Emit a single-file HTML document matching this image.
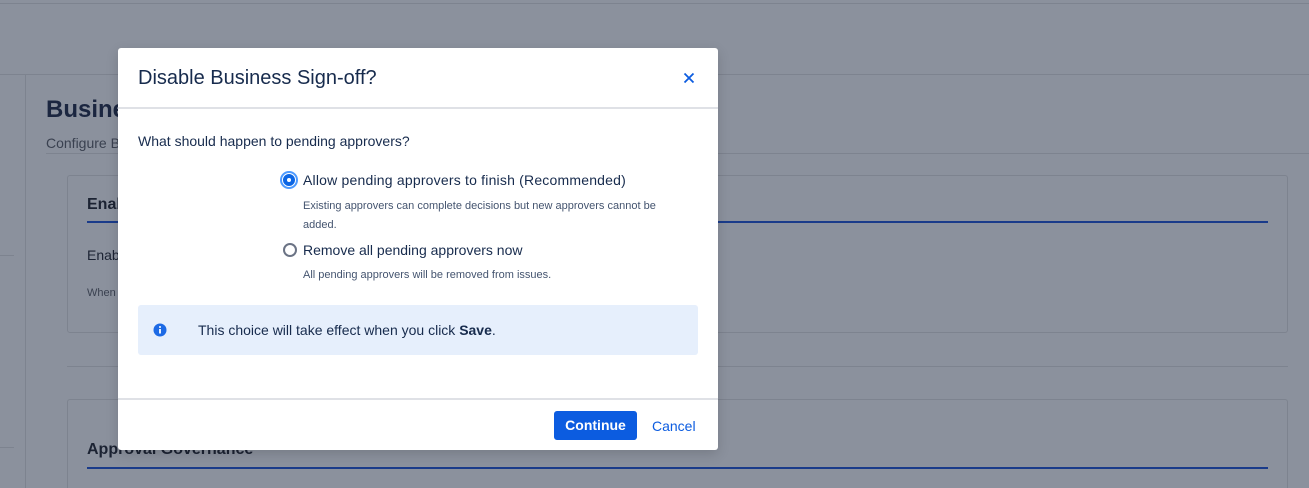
<!DOCTYPE html>
<html><head><style>
*{margin:0;padding:0;box-sizing:border-box}
html,body{height:488px}
body{width:1309px;height:488px;overflow:hidden;background:#8b919d;font-family:"Liberation Sans",sans-serif;position:relative}
.a{position:absolute}
.hl{position:absolute;height:1px;background:#7d838f}
.t{position:absolute;white-space:nowrap;color:#1c2333}
</style></head><body>
<div class="hl" style="top:3px;left:0;width:1309px"></div>
<div class="hl" style="top:74px;left:0;width:1309px"></div>
<div class="a" style="top:74px;left:25px;width:1px;height:414px;background:#7d838f"></div>
<div class="hl" style="top:255px;left:0;width:14px"></div>
<div class="hl" style="top:447px;left:0;width:14px"></div>
<div class="t" style="left:46px;top:96px;font-size:24px;font-weight:bold;color:#1b2640">Business</div>
<div class="t" style="left:46px;top:135px;font-size:14px;color:#3a4150">Configure Business</div>
<div class="hl" style="top:153px;left:46px;width:1263px"></div>
<div class="a" style="left:67px;top:175px;width:1221px;height:158px;border:1px solid #7d838f;border-radius:3px"></div>
<div class="t" style="left:87px;top:196px;font-size:16px;font-weight:bold">Enable</div>
<div class="a" style="left:87px;top:221px;width:1181px;height:2px;background:#1a3b8a"></div>
<div class="t" style="left:87px;top:247px;font-size:14px">Enable</div>
<div class="t" style="left:87px;top:287px;font-size:11px;color:#3a4150">When</div>
<div class="hl" style="top:366px;left:67px;width:1221px"></div>
<div class="a" style="left:67px;top:399px;width:1221px;height:89px;border:1px solid #7d838f;border-bottom:none;border-radius:3px 3px 0 0"></div>
<div class="t" style="left:87px;top:441px;font-size:16px;font-weight:bold">Approval Governance</div>
<div class="a" style="left:87px;top:467px;width:1181px;height:2px;background:#1a3b8a"></div>

<div class="a" style="left:118px;top:48px;width:600px;height:402px;background:#fff;border-radius:3px;box-shadow:0 4px 12px rgba(0,0,0,.15)">
  <div class="t" style="left:20px;top:19px;font-size:20px;color:#172b4d">Disable Business Sign-off?</div>
  <svg class="a" style="left:565px;top:24px" width="12" height="12" viewBox="0 0 12 12"><path d="M1.5 1.5L10.5 10.5M10.5 1.5L1.5 10.5" stroke="#0c5ce0" stroke-width="1.8"/></svg>
  <div class="a" style="left:0;top:59px;width:600px;height:2px;background:#dfe1e6"></div>
  <div class="t" style="left:20px;top:85px;font-size:14px;color:#172b4d">What should happen to pending approvers?</div>
  <div class="a" style="left:162px;top:123px;width:18px;height:18px;border-radius:50%;border:2px solid #4c9aff;padding:1px"><div style="width:12px;height:12px;border-radius:50%;background:#0c66e4;border:3.5px solid #0c66e4;position:relative"><div style="position:absolute;left:0.5px;top:0.5px;width:4px;height:4px;border-radius:50%;background:#fff"></div></div></div>
  <div class="t" style="left:185px;top:124px;font-size:14px;color:#172b4d;letter-spacing:0.2px">Allow pending approvers to finish (Recommended)</div>
  <div class="t" style="left:185px;top:152px;font-size:11px;color:#44546f">Existing approvers can complete decisions but new approvers cannot be</div>
  <div class="t" style="left:185px;top:171px;font-size:11px;color:#44546f">added.</div>
  <div class="a" style="left:165px;top:195px;width:14px;height:14px;border-radius:50%;border:2px solid #6b7385"></div>
  <div class="t" style="left:185px;top:194px;font-size:14px;color:#172b4d">Remove all pending approvers now</div>
  <div class="t" style="left:185px;top:221px;font-size:11px;color:#44546f">All pending approvers will be removed from issues.</div>
  <div class="a" style="left:20px;top:257px;width:560px;height:50px;background:#e6effc;border-radius:3px">
    <svg class="a" style="left:15px;top:18px" width="14" height="14" viewBox="0 0 14 14"><circle cx="7" cy="7" r="6.5" fill="#1d6ae5"/><rect x="6.1" y="6" width="1.8" height="4.5" fill="#fff"/><circle cx="7" cy="4" r="1" fill="#fff"/></svg>
    <div class="t" style="left:60px;top:17px;font-size:14px;color:#172b4d">This choice will take effect when you click <b>Save</b>.</div>
  </div>
  <div class="a" style="left:0;top:350px;width:600px;height:2px;background:#dfe1e6"></div>
  <div class="a" style="left:436px;top:363px;width:83px;height:29px;background:#0c5ce0;border-radius:3px;color:#fff;font-size:14px;font-weight:bold;text-align:center;line-height:29px">Continue</div>
  <div class="t" style="left:534px;top:370px;font-size:14px;color:#0c5ce0">Cancel</div>
</div>
</body></html>
